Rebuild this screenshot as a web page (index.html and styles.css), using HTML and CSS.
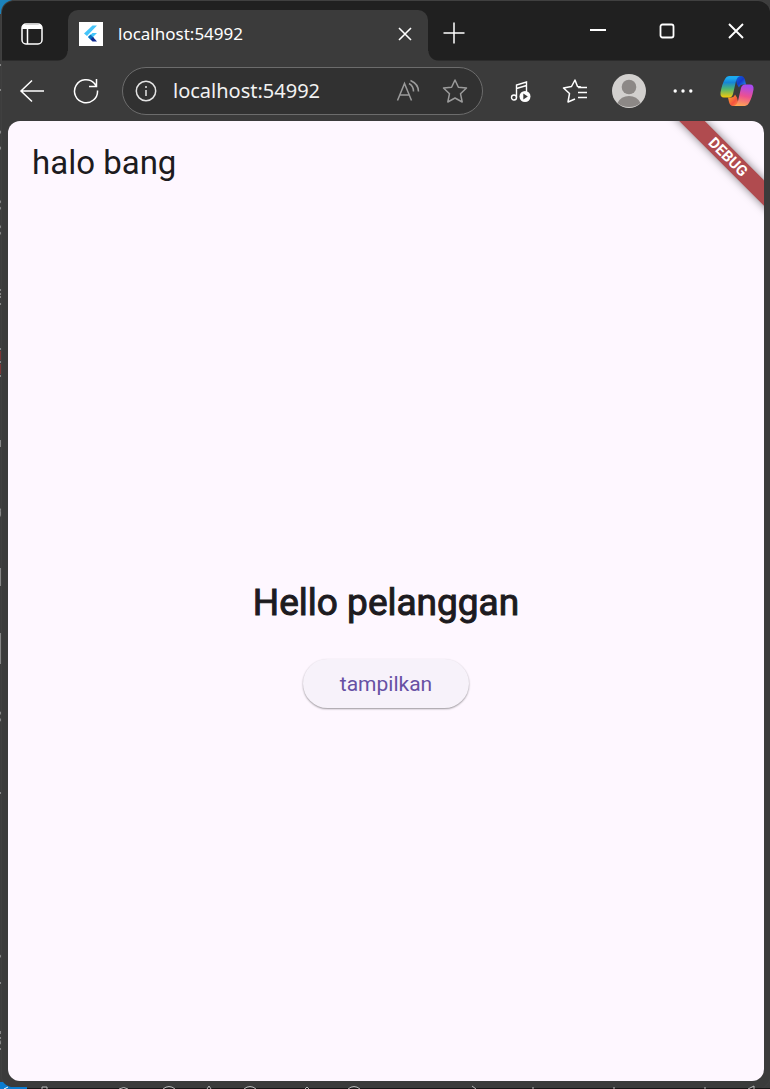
FILE: index.html
```html
<!DOCTYPE html>
<html lang="id">
<head>
<meta charset="utf-8">
<meta name="viewport" content="width=device-width, initial-scale=1">
<title>localhost:54992</title>
<link rel="stylesheet" href="styles.css">
</head>
<body>
<div class="desktop">
  <svg class="desktop-edge" width="3" height="1089" viewBox="0 0 3 1089" fill="none" stroke="#858585" stroke-width="2" aria-hidden="true">
    <path d="M0 65h2M0 90h2M0 131l2 3M0 147l2 3M0 201l2 2v4l-2 2M0 226l2 2v4l-2 2M0 290h2M0 294h2M0 297h2M0 304h2M0 349h2M0 362h2M0 376h2M0 441h1v6M0 509l2 2-2 2 2 4M1 568v18M1 633v31M0 712l2 3M0 721l2-3M0 793h2M0 957l2-2v4M0 983h2M1 1031v3M0 1038h2M0 1044l2-4M0 1049h2v5"/>
    <path d="M1 351v9M1 364v10" stroke="#7d3535"/>
  </svg>
  <svg class="desktop-foot" width="770" height="7" viewBox="0 0 770 7" fill="none" stroke="#b8b8b8" aria-hidden="true">
    <path d="M27 6h743v1H27z" fill="#151515" stroke="none"/>
    <path d="M0 0h3q3 4 8 5h16v2H0z" fill="#0a7bd0" stroke="none"/>
    <path d="M4 7l4-2" stroke="#fff"/>
    <path d="M42 7V5h5v2M119 7q5-3 9 0M163 7q6-5 12 0M207 7l2-3 2 3M244 7q6-5 12 0M305 7l2-2 2 2M348 7q6-5 12 0M472 4l4 3M532 6h2M613 6h2M704 6h2M748 7l6-3v3"/>
  </svg>
  <div class="window">
    <header class="tabstrip">
      <button class="icon-btn workspace" aria-label="Tab actions">
        <svg width="24" height="24" viewBox="0 0 24 24" fill="none" stroke="#fff" stroke-width="1.5"><rect x="2" y="2" width="20" height="20" rx="4"/><path d="M3 2.800h18q1 1 1 4.200H2q0-3.200 1-4.200z" fill="#fff" stroke="none"/><path d="M7.500 7v15"/></svg>
      </button>
      <div class="tab">
        <svg class="favicon" width="24" height="24" viewBox="0 0 24 24"><path fill="#fff" d="M0 0h24v24H0z"/><path fill="#45c5fa" d="M13.500 3.500H18L8 14l-3-2.500zM13.500 11H18l-4 4-2.500 2.500L9 15z"/><path fill="#0b6fc0" d="M9 15l2.500-2.500L15 16l-3.500 1.500z"/><path fill="#112c91" d="M11.500 17.500L14 15l4 4.500h-4.500z"/></svg>
        <span class="tab-title">localhost:54992</span>
        <button class="icon-btn tab-close" aria-label="Close tab">
          <svg width="14" height="14" viewBox="0 0 14 14" fill="none" stroke="#fff" stroke-width="1.600"><path d="M1 1l12 12M13 1L1 13"/></svg>
        </button>
      </div>
      <button class="icon-btn new-tab" aria-label="New tab">
        <svg width="22" height="22" viewBox="0 0 22 22" fill="none" stroke="#fff" stroke-width="1.500"><path d="M11 .5v21M.5 11h21"/></svg>
      </button>
      <div class="window-controls">
        <button class="icon-btn control" aria-label="Minimize"><svg width="16" height="16" viewBox="0 0 16 16"><path d="M0 6h16v2H0z" fill="#fff"/></svg></button>
        <button class="icon-btn control" aria-label="Maximize"><svg width="16" height="16" viewBox="0 0 16 16" fill="none" stroke="#fff" stroke-width="1.800"><rect x="1.500" y="1.500" width="13" height="13" rx="2"/></svg></button>
        <button class="icon-btn control" aria-label="Close"><svg width="16" height="16" viewBox="0 0 16 16" fill="none" stroke="#fff" stroke-width="1.900"><path d="M1 1l14 14M15 1L1 15"/></svg></button>
      </div>
    </header>

    <nav class="toolbar" aria-label="Browser toolbar">
      <div class="nav-buttons">
        <button class="icon-btn" aria-label="Back"><svg width="26" height="26" viewBox="0 0 26 26" fill="none" stroke="#fff" stroke-width="1.500"><path d="M25 13H2M13 2.500L2 13l11 10.500"/></svg></button>
        <button class="icon-btn" aria-label="Reload"><svg width="26" height="26" viewBox="0 0 26 26" fill="none" stroke="#fff" stroke-width="1.500"><path d="M24.500 12.500A11.500 11.500 0 1 1 21.500 5.500L23.500 8.500M23.500 1v7.500H16"/></svg></button>
      </div>
      <div class="address">
        <svg class="info" width="22" height="22" viewBox="0 0 22 22" fill="none" stroke="#e4e4e4" stroke-width="1.500" aria-hidden="true"><circle cx="11" cy="11" r="9.700"/><path d="M11 10v6"/><circle cx="11" cy="7" r="1" fill="#e4e4e4" stroke="none"/></svg>
        <input class="address-input" type="text" value="localhost:54992" aria-label="Address">
        <button class="icon-btn" aria-label="Read aloud"><svg width="24" height="24" viewBox="0 0 24 24" fill="none" stroke="#9b9b9b" stroke-width="1.500"><path d="M1.500 21.500L8.500 4.500l7 17M4 16h9.500M13 4.500q4.500 2.500 4.500 8M14.500 1.500q8 3.500 8 11"/></svg></button>
        <button class="icon-btn" aria-label="Add to favorites"><svg width="26" height="26" viewBox="0 0 26 26" fill="none" stroke="#9b9b9b" stroke-width="1.500" stroke-linejoin="round"><path d="M13 2l3.400 7.200 8.100.8-6 5.700 1.700 8.300-7.200-4-7.200 4 1.700-8.300-6-5.700 8.100-.8z"/></svg></button>
      </div>
      <div class="actions">
        <button class="icon-btn action" aria-label="Media controls"><svg width="22" height="22" viewBox="0 0 22 22" fill="none" stroke="#fff" stroke-width="1.400"><circle cx="4" cy="17.500" r="2.500"/><path d="M6.500 17.500V5l10-3v10M6.500 8.500l10-3"/><circle cx="15" cy="16.500" r="5.500" fill="#fff" stroke="none"/><path d="M13.300 13.500v6l4.500-3z" fill="#3b3b3b" stroke="none"/></svg></button>
        <button class="icon-btn action" aria-label="Favorites"><svg width="26" height="26" viewBox="0 0 26 26" fill="none" stroke="#fff" stroke-width="1.500" stroke-linejoin="round"><path d="M19 9l-3.500-.5L13 2 9.500 8.500 1.500 10l6 5.500L6 24l7-3M16 9.500h9M16 14.500h9M16 19.500h9"/></svg></button>
        <button class="icon-btn action" aria-label="Profile"><svg width="34" height="34" viewBox="0 0 34 34"><circle cx="17" cy="17" r="17" fill="#d2d0ce"/><circle cx="17" cy="13" r="7.300" fill="#8c8886"/><path d="M5.500 29Q9 22 17 22t11.500 7Q24 33 17 33T5.500 29z" fill="#8c8886"/></svg></button>
        <button class="icon-btn action" aria-label="Settings and more"><svg width="20" height="6" viewBox="0 0 20 6" fill="#fff"><circle cx="2.200" cy="3" r="1.700"/><circle cx="10" cy="3" r="1.700"/><circle cx="17.800" cy="3" r="1.700"/></svg></button>
        <button class="icon-btn action copilot" aria-label="Copilot">
          <svg width="34" height="32" viewBox="0 0 34 32">
            <defs>
              <linearGradient id="cool" x1="0" y1="0" x2="0" y2="1"><stop offset=".1" stop-color="#1caaf0"/><stop offset=".3" stop-color="#1685d8"/><stop offset=".6" stop-color="#4fb673"/><stop offset="1" stop-color="#f8cb08"/></linearGradient>
              <linearGradient id="warm" x1=".4" y1="0" x2="0.2" y2="1"><stop offset="0" stop-color="#a84af0"/><stop offset=".5" stop-color="#ed5090"/><stop offset="1" stop-color="#ffab50"/></linearGradient>
              <linearGradient id="blue" x1="0" y1="0" x2="1" y2="1"><stop offset="0" stop-color="#126bd8"/><stop offset=".5" stop-color="#143acb"/><stop offset="1" stop-color="#28a5ed"/></linearGradient>
              <linearGradient id="flame" x1="0" y1="0" x2="1" y2="1"><stop offset="0" stop-color="#ffb32a"/><stop offset=".6" stop-color="#f5533f"/><stop offset="1" stop-color="#ff9a46"/></linearGradient>
            </defs>
            <path d="M15 1h6q3 0 4 4l1 4.500h-3q-3 0-4 3l-2-3z" fill="url(#blue)"/>
            <path d="M19 31h-6q-3 0-4-4l-1-4.500h3q3 0 4-3l2 3z" fill="url(#flame)"/>
            <path d="M9 1h11q-3 1-4 5l-3 13q-1 3.500-4 3.500H4q-4 0-3.500-5Q2 9 5 4 6.500 1 9 1z" fill="url(#cool)"/>
            <path d="M25 31H14q3-1 4-5l3-13q1-3.500 4-3.500h5q4 0 3.500 5Q32 23 29 28q-1.500 3-4 3z" fill="url(#warm)"/>
          </svg>
        </button>
      </div>
    </nav>

    <main class="page">
      <p class="greeting">halo bang</p>
      <section class="center">
        <h1 class="headline">Hello pelanggan</h1>
        <button class="show-btn">tampilkan</button>
      </section>
      <div class="debug-banner">DEBUG</div>
    </main>
  </div>
</div>
</body>
</html>
```
FILE: styles.css
```css
* { box-sizing: border-box; }

body { margin: 0; background: #3c3c3c; }

.desktop {
  position: relative;
  min-height: 100vh;
  display: flex;
  padding: 1px 0 1px 2px;
  overflow: hidden;
  background: linear-gradient(#1b83bd, #1b83bd) no-repeat 0 0 / 12px 14px, #3d3d3d;
}

.desktop-edge { position: absolute; left: 0; top: 0; }

.desktop-foot { position: absolute; left: 0; bottom: 0; z-index: 1; }

.window {
  position: relative;
  flex: 1;
  min-width: 0;
  display: flex;
  flex-direction: column;
  padding-bottom: 7px;
  border-radius: 12px;
  background: #3b3b3b;
  box-shadow: 0 0 0 1px #404040;
}

.icon-btn {
  display: flex;
  align-items: center;
  justify-content: center;
  flex: none;
  padding: 0;
  border: 0;
  background: none;
}

.tabstrip {
  display: flex;
  height: 60px;
  border-radius: 12px 12px 0 0;
  border-bottom: 1px solid #2c2c2c;
  background: #202020;
}

.workspace { width: 60px; margin-right: 6px; padding-top: 6px; }

.tab {
  position: relative;
  flex: 0 1 360px;
  min-width: 0;
  display: flex;
  align-items: center;
  gap: 15px;
  margin: 9px 0 -1px;
  padding: 0 16px 3px 11px;
  border-radius: 10px 10px 0 0;
  background: #3b3b3b;
}

.tab::before,
.tab::after {
  content: "";
  position: absolute;
  bottom: 0;
  width: 10px;
  height: 10px;
}

.tab::before { right: 100%; background: radial-gradient(circle at 0 0, #202020 9px, #3b3b3b 10px); }
.tab::after { left: 100%; background: radial-gradient(circle at 100% 0, #202020 9px, #3b3b3b 10px); }

.tab-title {
  flex: 1;
  font: 17px/24px "Noto Sans", "Open Sans", sans-serif;
  color: #fff;
}

.new-tab { width: 52px; padding-top: 4px; }

.window-controls { display: flex; margin-left: auto; }

.control { width: 69px; }

.toolbar {
  display: flex;
  align-items: center;
  height: 60px;
}

.nav-buttons { display: flex; gap: 28px; padding: 0 23px 0 17px; }

.address {
  flex: 1;
  display: flex;
  align-items: center;
  gap: 16px;
  min-width: 0;
  height: 48px;
  padding: 0 14px 0 12px;
  border: 1px solid #6c6c6c;
  border-radius: 24px;
  background: #313131;
}

.info { flex: none; }

.address .icon-btn + .icon-btn { margin-left: 6px; }

.address-input {
  flex: 1;
  width: 0;
  min-width: 0;
  padding: 0;
  border: 0;
  outline: 0;
  background: none;
  font: 20px/28px "Noto Sans", "Open Sans", sans-serif;
  color: #f2f2f2;
}

.actions { display: flex; padding: 0 6px 0 11px; }

.action { width: 54px; }

.page {
  position: relative;
  flex: 1;
  display: flex;
  flex-direction: column;
  margin: 0 6px;
  padding: 21px 24px;
  overflow: hidden;
  border-radius: 12px;
  background: #fef7ff;
  font-family: Roboto, sans-serif;
  color: #1d1b20;
}

.greeting {
  margin: 0;
  font-size: 33px;
  line-height: 42px;
}

.center {
  flex: 1;
  display: flex;
  flex-direction: column;
  align-items: center;
  justify-content: center;
  gap: 29px;
  padding-top: 40px;
}

.headline {
  margin: 0;
  font-size: 37px;
  line-height: 54px;
  font-weight: 400;
  -webkit-text-stroke: 1px #1d1b20;
}

.show-btn {
  height: 49px;
  padding: 0 37px;
  border: 0;
  border-radius: 25px;
  background: #f7f2fa;
  box-shadow: 0 1px 2px rgba(0, 0, 0, 0.4);
  font: 21px/30px Roboto, sans-serif;
  color: #6750a4;
}

.debug-banner {
  position: absolute;
  top: 27px;
  right: -44px;
  width: 160px;
  transform: rotate(45deg);
  background: #b04b4f;
  box-shadow: 0 0 9px rgba(0, 0, 0, 0.5);
  font-size: 15px;
  line-height: 18px;
  font-weight: 700;
  text-align: center;
  color: #fff;
}
```
